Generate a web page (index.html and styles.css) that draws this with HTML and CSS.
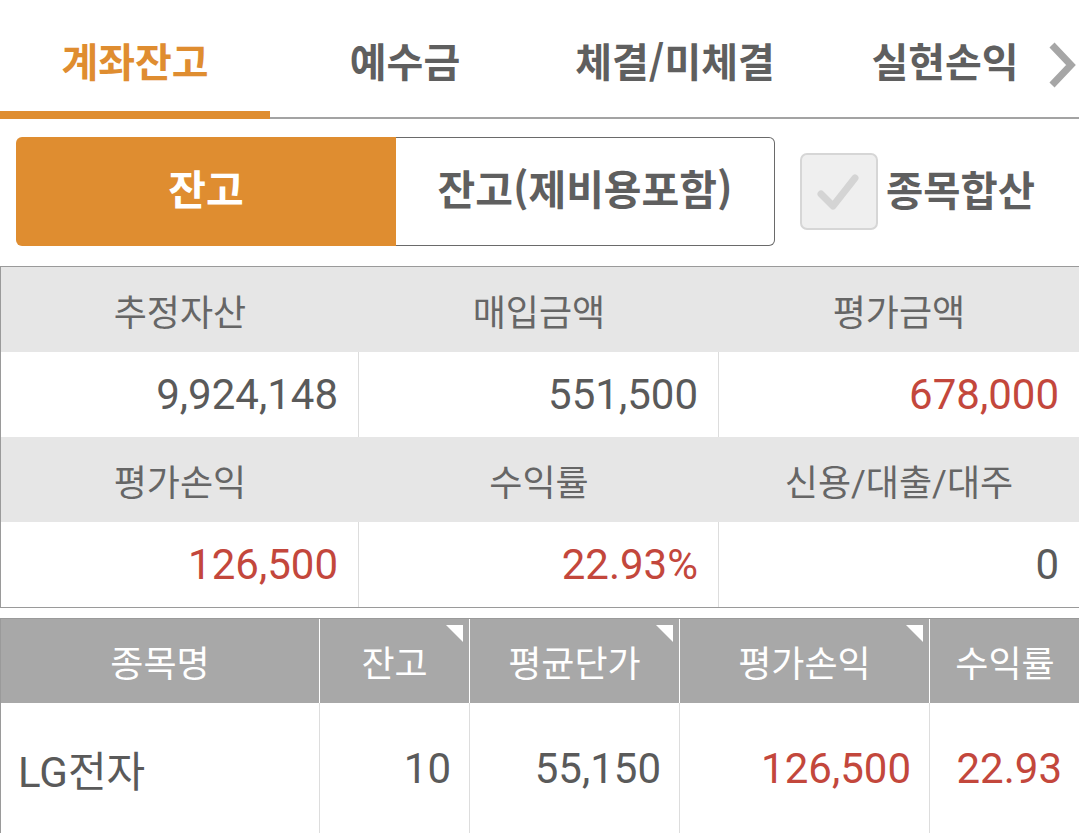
FILE: index.html
```html
<!DOCTYPE html>
<html lang="ko">
<head>
<meta charset="utf-8">
<title>계좌잔고</title>
<link rel="stylesheet" href="styles.css">
</head>
<body>
<div class="app">
  <nav class="tabs">
    <div class="tab active">계좌잔고</div>
    <div class="tab">예수금</div>
    <div class="tab">체결/미체결</div>
    <div class="tab">실현손익</div>
    <svg class="chev" width="30" height="48" viewBox="0 0 30 48"><path d="M5 4 L24 24 L5 44" fill="none" stroke="#a6a6a6" stroke-width="7"/></svg>
  </nav>

  <div class="controls">
    <div class="segment">
      <div class="seg on">잔고</div>
      <div class="seg off">잔고(제비용포함)</div>
    </div>
    <div class="check">
      <span class="box"><svg width="44" height="40" viewBox="0 0 44 40"><path d="M4 22 L16 34 L38 6" fill="none" stroke="#d4d4d4" stroke-width="7" stroke-linecap="round" stroke-linejoin="round"/></svg></span>
      <span class="check-label">종목합산</span>
    </div>
  </div>

  <div class="summary">
    <div class="srow head">
      <div class="cell">추정자산</div>
      <div class="cell">매입금액</div>
      <div class="cell">평가금액</div>
    </div>
    <div class="srow val">
      <div class="cell">9,924,148</div>
      <div class="cell">551,500</div>
      <div class="cell red">678,000</div>
    </div>
    <div class="srow head">
      <div class="cell">평가손익</div>
      <div class="cell">수익률</div>
      <div class="cell">신용/대출/대주</div>
    </div>
    <div class="srow val">
      <div class="cell red">126,500</div>
      <div class="cell red">22.93%</div>
      <div class="cell">0</div>
    </div>
  </div>

  <div class="list">
    <div class="lrow lhead">
      <div class="lc c1">종목명</div>
      <div class="lc c2 sort">잔고</div>
      <div class="lc c3 sort">평균단가</div>
      <div class="lc c4 sort">평가손익</div>
      <div class="lc c5">수익률</div>
    </div>
    <div class="lrow ldata">
      <div class="lc c1 name">LG전자</div>
      <div class="lc c2">10</div>
      <div class="lc c3">55,150</div>
      <div class="lc c4 red">126,500</div>
      <div class="lc c5 red">22.93</div>
    </div>
  </div>
</div>
</body>
</html>
```

FILE: styles.css
```css
html, body {
  margin: 0;
  padding: 0;
  background: #ffffff;
}
body {
  font-family: Roboto, "Noto Sans CJK KR", sans-serif;
  color: #555555;
  width: 1079px;
  height: 833px;
  overflow: hidden;
}
.app {
  width: 1079px;
}

/* tabs */
.tabs {
  position: relative;
  display: flex;
  height: 119px;
  overflow: hidden;
}
.tab {
  flex: 0 0 270px;
  box-sizing: border-box;
  height: 119px;
  padding-top: 38px;
  text-align: center;
  font-family: "Noto Sans CJK KR", sans-serif;
  font-weight: 700;
  font-size: 40px;
  line-height: 44px;
  color: #5f5f5f;
  border-bottom: 2px solid #a3a3a3;
}
.tab.active {
  color: #df8d30;
  border-bottom: 8px solid #df8d30;
}
.chev {
  position: absolute;
  right: 2px;
  top: 41px;
}

/* controls */
.controls {
  display: flex;
  align-items: center;
  margin: 18px 0 0 16px;
  height: 109px;
}
.segment {
  display: flex;
  width: 759px;
  height: 109px;
}
.seg {
  box-sizing: border-box;
  display: flex;
  align-items: center;
  justify-content: center;
  padding-bottom: 10px;
  font-family: "Noto Sans CJK KR", sans-serif;
  font-weight: 700;
  font-size: 41px;
}
.seg.on {
  width: 380px;
  background: #df8d30;
  color: #ffffff;
  border-radius: 6px 0 0 6px;
}
.seg.off {
  width: 379px;
  border: 1px solid #6a6a6a;
  border-left: none;
  border-radius: 0 6px 6px 0;
  color: #5f5f5f;
}
.check {
  display: flex;
  align-items: center;
  margin-left: 25px;
}
.box {
  box-sizing: border-box;
  width: 78px;
  height: 77px;
  border: 2px solid #d6d6d6;
  border-radius: 7px;
  background: #efefef;
  display: flex;
  align-items: center;
  justify-content: center;
}
.check-label {
  margin-left: 8px;
  padding-bottom: 6px;
  font-family: "Noto Sans CJK KR", sans-serif;
  font-weight: 700;
  font-size: 40.5px;
  color: #5f5f5f;
}

/* summary */
.summary {
  margin-top: 20px;
  border-top: 1px solid #9a9a9a;
  border-left: 1px solid #9a9a9a;
  border-bottom: 1px solid #9a9a9a;
}
.srow {
  display: grid;
  grid-template-columns: 358px 360px 360px;
  height: 85px;
}
.srow .cell {
  display: flex;
  align-items: center;
}
.srow.head {
  background: #e6e6e6;
}
.srow.head .cell {
  justify-content: center;
  color: #666666;
  font-size: 36px;
}
.srow.val .cell {
  justify-content: flex-end;
  padding-right: 20px;
  color: #5a5a5a;
  font-size: 42px;
  border-right: 1px solid #dddddd;
}
.srow.val .cell:last-child {
  border-right: none;
}
.red {
  color: #c3473c !important;
}

/* list */
.list {
  margin-top: 10px;
  border-left: 1px solid #9a9a9a;
  border-top: 1px solid #9a9a9a;
}
.lrow {
  display: grid;
  grid-template-columns: 319px 150px 210px 250px 150px;
}
.lhead {
  height: 84px;
  background: #a8a8a8;
}
.lc {
  display: flex;
  align-items: center;
  position: relative;
  box-sizing: border-box;
}
.lhead .lc {
  justify-content: center;
  color: #ffffff;
  font-size: 36px;
  border-right: 1px solid #ffffff;
}
.lhead .lc:last-child {
  border-right: none;
}
.lhead .sort::after {
  content: "";
  position: absolute;
  top: 6px;
  right: 6px;
  width: 0;
  height: 0;
  border-top: 17px solid #ffffff;
  border-left: 17px solid transparent;
}
.ldata {
  height: 130px;
}
.ldata .lc {
  justify-content: flex-end;
  padding-right: 18px;
  font-size: 42px;
  color: #5a5a5a;
  border-right: 1px solid #dddddd;
}
.ldata .lc:last-child {
  border-right: none;
}
.ldata .name {
  justify-content: flex-start;
  padding-left: 17px;
}
```
